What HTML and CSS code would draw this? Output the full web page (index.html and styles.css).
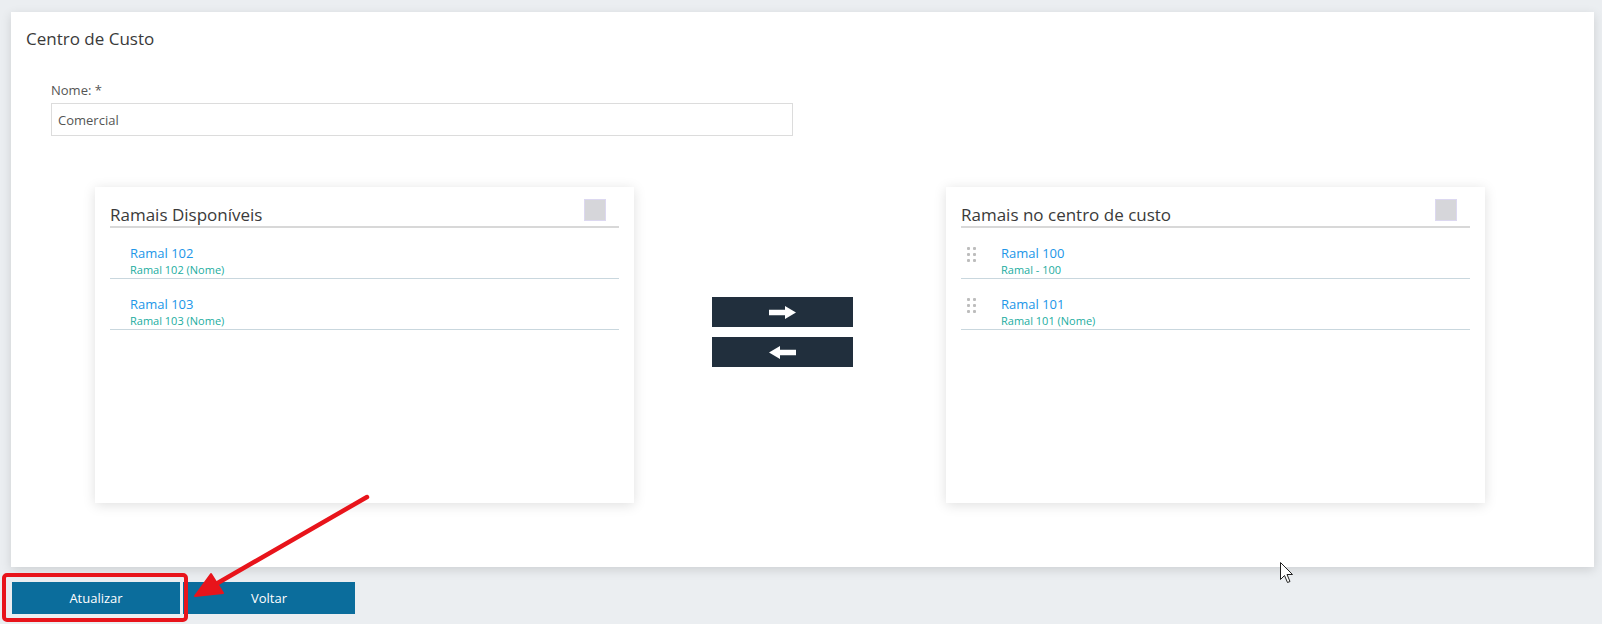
FILE: index.html
```html
<!DOCTYPE html>
<html lang="pt-BR">
<head>
  <meta charset="UTF-8" />
  <title>Centro de Custo</title>
  <link rel="stylesheet" href="styles.css">
</head>
<body>
  <div class="card">
    <h1 class="card-title">Centro de Custo</h1>

    <form class="cc-form">
      <div class="form-group">
        <label for="nome">Nome: <span class="required">*</span></label>
        <input type="text" id="nome" name="nome" value="Comercial" />
      </div>

      <div class="transfer">
        <div class="panel">
          <div class="panel-header">
            <h2>Ramais Disponíveis</h2>
            <span class="check-box"></span>
          </div>
          <ul class="ramal-list">
            <li class="ramal">
              <div class="ramal-text">
                <span class="ramal-name">Ramal 102</span>
                <span class="ramal-desc">Ramal 102 (Nome)</span>
              </div>
            </li>
            <li class="ramal">
              <div class="ramal-text">
                <span class="ramal-name">Ramal 103</span>
                <span class="ramal-desc">Ramal 103 (Nome)</span>
              </div>
            </li>
          </ul>
        </div>

        <div class="move-buttons">
          <button type="button" class="move-btn">
            <svg width="27" height="13" viewBox="0 0 27 13"><path d="M0 3.7H16V0L27 6.5L16 13V9.3H0Z" fill="#fff"/></svg>
          </button>
          <button type="button" class="move-btn">
            <svg width="27" height="13" viewBox="0 0 27 13"><path d="M27 3.7H11V0L0 6.5L11 13V9.3H27Z" fill="#fff"/></svg>
          </button>
        </div>

        <div class="panel">
          <div class="panel-header">
            <h2>Ramais no centro de custo</h2>
            <span class="check-box"></span>
          </div>
          <ul class="ramal-list sortable">
            <li class="ramal">
              <span class="handle"><i></i><i></i><i></i><i></i><i></i><i></i></span>
              <div class="ramal-text">
                <span class="ramal-name">Ramal 100</span>
                <span class="ramal-desc">Ramal - 100</span>
              </div>
            </li>
            <li class="ramal">
              <span class="handle"><i></i><i></i><i></i><i></i><i></i><i></i></span>
              <div class="ramal-text">
                <span class="ramal-name">Ramal 101</span>
                <span class="ramal-desc">Ramal 101 (Nome)</span>
              </div>
            </li>
          </ul>
        </div>
      </div>
    </form>
  </div>

  <div class="actions">
    <button type="submit" class="action-btn">Atualizar</button>
    <button type="button" class="action-btn">Voltar</button>
  </div>

  <!-- screenshot annotations -->
  <div class="mark-box"></div>
  <svg class="annotation" width="1602" height="624" viewBox="0 0 1602 624">
    <line x1="367" y1="497" x2="216" y2="584" stroke="#e8141b" stroke-width="4.5" stroke-linecap="round"/>
    <polygon points="195,596 211,574 223,593" fill="#e8141b" stroke="#e8141b" stroke-width="2" stroke-linejoin="round"/>
    <path d="M1280.5 562.5V579.5L1284.5 575.5L1287.5 582.5L1290 581.5L1287 574.5H1292.5Z" fill="#fff" stroke="#222" stroke-width="1"/>
  </svg>
</body>
</html>
```

FILE: styles.css
```css
* {
  box-sizing: border-box;
}

body {
  margin: 0;
  background: #ebeef1;
  font-family: 'Open Sans', 'Liberation Sans', sans-serif;
  color: #444;
  position: relative;
  height: 624px;
  overflow: hidden;
}

.card {
  margin: 12px 8px 0 11px;
  height: 555px;
  padding: 15px;
  background: #fff;
  box-shadow: 0 3px 10px rgba(0, 0, 0, 0.13);
}

.card-title {
  margin: 0;
  font-size: 17px;
  font-weight: 400;
  line-height: 24px;
  color: #3a3a3a;
}

.form-group {
  margin: 30px 0 0 25px;
}

label {
  display: block;
  font-size: 13px;
  line-height: 18px;
  color: #555;
  margin-bottom: 4px;
}

.required {
  color: #555;
}

input {
  display: block;
  width: 742px;
  height: 33px;
  padding: 0 6px;
  border: 1px solid #dcdcdc;
  font-family: inherit;
  font-size: 13px;
  color: #555;
  outline: none;
}

.transfer {
  display: flex;
  align-items: flex-start;
  margin: 51px 0 0 69px;
}

.panel {
  width: 539px;
  height: 316px;
  padding: 12px 15px 0;
  background: #fff;
  box-shadow: 0 2px 12px rgba(0, 0, 0, 0.13);
}

.panel-header {
  display: flex;
  justify-content: space-between;
  height: 29px;
  border-bottom: 2px solid #d8d8d8;
}

.panel-header h2 {
  align-self: flex-end;
  margin: 0;
  font-size: 17px;
  font-weight: 400;
  line-height: 22px;
  color: #3a3a3a;
}

.check-box {
  width: 22px;
  height: 22px;
  margin-right: 13px;
  background: #d6d6da;
  border: 1px solid #dcd8f0;
}

.ramal-list {
  list-style: none;
  margin: 0;
  padding: 0;
}

.ramal {
  display: flex;
  height: 51px;
  padding: 16px 0 0 20px;
  border-bottom: 1px solid #c9d7de;
}

.sortable .ramal {
  padding-left: 6px;
}

.ramal-text {
  display: flex;
  flex-direction: column;
}

.ramal-name {
  font-size: 13px;
  line-height: 18px;
  color: #2196e8;
}

.ramal-desc {
  font-size: 11px;
  line-height: 15px;
  color: #22ad9f;
}

.handle {
  display: grid;
  grid-template-columns: 3px 3px;
  grid-auto-rows: 3px;
  column-gap: 3px;
  row-gap: 3px;
  width: 34px;
  margin-top: 3px;
}

.handle i {
  background: #bdbdbd;
  border-radius: 1px;
}

.move-buttons {
  display: flex;
  flex-direction: column;
  gap: 10px;
  margin: 110px 93px 0 78px;
}

.move-btn {
  width: 141px;
  height: 30px;
  display: flex;
  align-items: center;
  justify-content: center;
  padding: 0;
  border: none;
  background: #212f3d;
  cursor: pointer;
}

.actions {
  display: flex;
  gap: 3px;
  margin: 15px 0 0 12px;
}

.action-btn {
  width: 168px;
  height: 32px;
  border: none;
  background: #0b6d9c;
  color: #fff;
  font-family: inherit;
  font-size: 13px;
  cursor: pointer;
}

.action-btn + .action-btn {
  width: 172px;
}

.mark-box {
  position: absolute;
  left: 2px;
  top: 573px;
  width: 186px;
  height: 49px;
  border: 4px solid #e8141b;
  border-radius: 5px;
}

.annotation {
  position: absolute;
  left: 0;
  top: 0;
  pointer-events: none;
}
```
